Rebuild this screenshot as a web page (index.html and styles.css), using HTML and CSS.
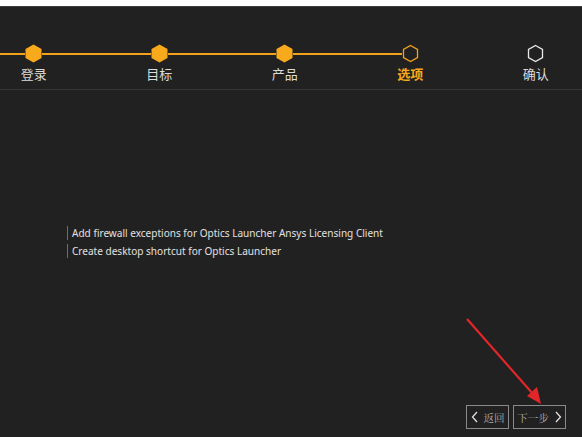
FILE: index.html
```html
<!DOCTYPE html>
<html lang="zh">
<head>
<meta charset="utf-8">
<link rel="stylesheet" href="styles.css">
</head>
<body>
<div class="app">
  <div class="stepper">
    <div class="step done">
      <div class="track"><span class="seg on"></span><svg class="hex" viewBox="0 0 17 19"><polygon points="8.5,0.5 16.5,5 16.5,14 8.5,18.5 0.5,14 0.5,5"/></svg><span class="seg on"></span></div>
      <div class="label">登录</div>
    </div>
    <div class="step done">
      <div class="track"><span class="seg on"></span><svg class="hex" viewBox="0 0 17 19"><polygon points="8.5,0.5 16.5,5 16.5,14 8.5,18.5 0.5,14 0.5,5"/></svg><span class="seg on"></span></div>
      <div class="label">目标</div>
    </div>
    <div class="step done">
      <div class="track"><span class="seg on"></span><svg class="hex" viewBox="0 0 17 19"><polygon points="8.5,0.5 16.5,5 16.5,14 8.5,18.5 0.5,14 0.5,5"/></svg><span class="seg on"></span></div>
      <div class="label">产品</div>
    </div>
    <div class="step current">
      <div class="track"><span class="seg on"></span><svg class="hex" viewBox="0 0 17 19"><polygon points="8.5,1.5 15.5,5.5 15.5,13.5 8.5,17.5 1.5,13.5 1.5,5.5"/></svg><span class="seg"></span></div>
      <div class="label">选项</div>
    </div>
    <div class="step todo">
      <div class="track"><span class="seg"></span><svg class="hex" viewBox="0 0 17 19"><polygon points="8.5,1.5 15.5,5.5 15.5,13.5 8.5,17.5 1.5,13.5 1.5,5.5"/></svg><span class="seg"></span></div>
      <div class="label">确认</div>
    </div>
  </div>
  <div class="content">
    <ul class="options">
      <li class="option"><span class="text">Add firewall exceptions for Optics Launcher Ansys Licensing Client</span></li>
      <li class="option"><span class="text">Create desktop shortcut for Optics Launcher</span></li>
    </ul>
    <div class="footer">
      <button class="btn back"><svg class="chev" viewBox="0 0 7 12"><polyline points="6,1 1.5,6 6,11"/></svg><span>返回</span></button>
      <button class="btn next"><span>下一步</span><svg class="chev" viewBox="0 0 7 12"><polyline points="1,1 5.5,6 1,11"/></svg></button>
    </div>
  </div>
  <svg class="annot" viewBox="0 0 582 437" width="582" height="437">
    <line x1="467" y1="319" x2="533" y2="394" stroke="#e3262a" stroke-width="2.2"/>
    <polygon points="541,404 527,396 537,387" fill="#e3262a"/>
  </svg>
</div>
</body>
</html>
```
FILE: styles.css
```css
html, body {
  margin: 0;
  padding: 0;
  background: #ffffff;
}
body {
  width: 582px;
  height: 437px;
  overflow: hidden;
  font-family: "Noto Sans", "Noto Sans CJK SC", sans-serif;
}
.app {
  margin-top: 6px;
  height: 431px;
  box-sizing: border-box;
  border-top: 1px solid #3d3d3d;
  background: #212121;
  display: flex;
  flex-direction: column;
  position: relative;
}
.stepper {
  display: flex;
  margin-left: -29px;
  padding-top: 37px;
  padding-bottom: 5px;
  border-bottom: 1px solid #363636;
}
.step {
  width: 125.5px;
  flex: none;
  display: flex;
  flex-direction: column;
  align-items: stretch;
}
.track {
  display: flex;
  align-items: center;
  height: 19px;
}
.seg {
  flex: 1;
  height: 2px;
}
.seg.on {
  background: #f2a31b;
}
.hex {
  width: 17px;
  height: 19px;
  flex: none;
  display: block;
}
.done .hex polygon {
  fill: #f8a91c;
}
.current .hex polygon {
  fill: none;
  stroke: #f2a31b;
  stroke-width: 1.3;
}
.todo .hex polygon {
  fill: none;
  stroke: #e8e8e8;
  stroke-width: 1.3;
}
.label {
  text-align: center;
  font-family: "Noto Sans CJK SC", sans-serif;
  font-size: 13px;
  line-height: 20px;
  color: #dcdcdc;
  margin-top: 1px;
}
.current .label {
  color: #f8a91c;
  font-weight: bold;
}
.content {
  flex: 1;
  display: flex;
  flex-direction: column;
}
.options {
  list-style: none;
  margin: 0;
  padding: 134px 0 0 67px;
}
.option {
  display: flex;
  align-items: center;
  height: 18px;
}
.option .text {
  border-left: 1px solid #6e6e6e;
  padding-left: 4px;
  font-size: 10.05px;
  line-height: 14px;
  color: #e2e2e2;
}
.footer {
  margin-top: auto;
  align-self: flex-end;
  display: flex;
  gap: 4px;
  margin-right: 16px;
  margin-bottom: 8px;
}
.btn {
  height: 24px;
  box-sizing: border-box;
  border: 1px solid #8a8a8a;
  background: transparent;
  color: #b4b4b4;
  font-family: "Noto Serif CJK SC", "Noto Sans CJK SC", serif;
  font-size: 10.5px;
  padding: 0;
  display: flex;
  align-items: center;
  justify-content: center;
  gap: 6px;
}
.btn.back {
  width: 43px;
}
.btn.next {
  width: 53px;
}
.chev {
  width: 7px;
  height: 12px;
  flex: none;
}
.chev polyline {
  fill: none;
  stroke: #e0e0e0;
  stroke-width: 1.3;
}
.annot {
  position: absolute;
  left: 0;
  top: -7px;
  pointer-events: none;
}
```
